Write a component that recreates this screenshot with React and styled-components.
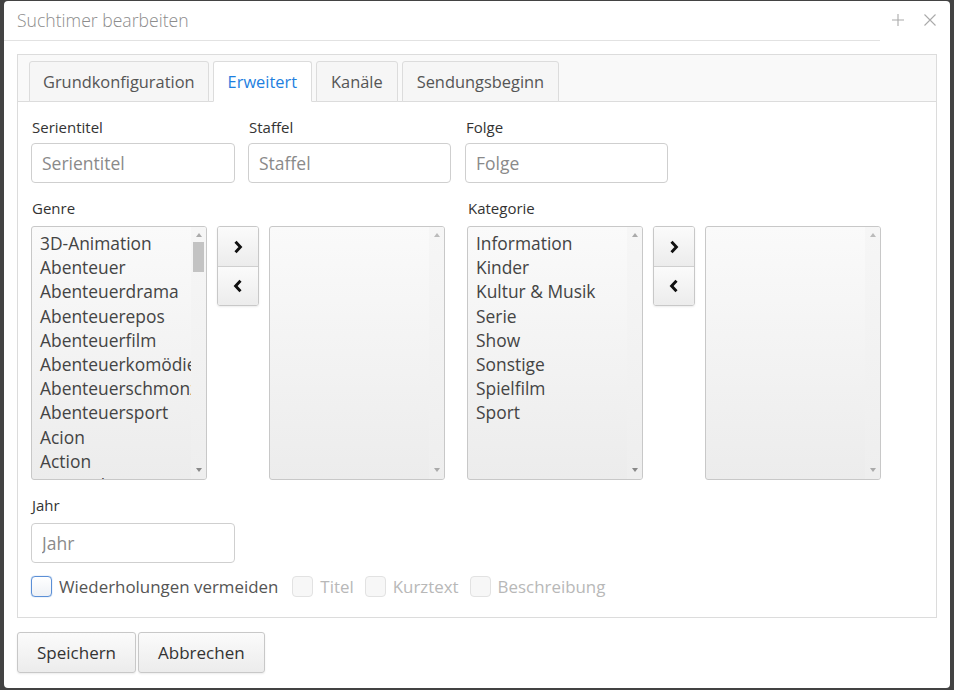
import React from "react";
import styled, { createGlobalStyle } from "styled-components";

const GlobalStyle = createGlobalStyle`
  html, body {
    margin: 0;
    padding: 0;
    background: #434343;
    font-family: "Open Sans", "Noto Sans", sans-serif;
  }
  * { box-sizing: border-box; }
`;

/* ---------------- page + dialog ---------------- */
const Page = styled.div`
  width: 954px;
  height: 690px;
  padding: 1px 4px 2px 4px;
  background: #434343;
  overflow: hidden;
`;

const Dialog = styled.div`
  width: 946px;
  height: 687px;
  background: #fff;
  border-radius: 4px;
  display: flex;
  flex-direction: column;
`;

const Header = styled.div`
  height: 40px;
  padding-bottom: 2px;
  display: flex;
  align-items: center;
  position: relative;
`;

const HeaderLine = styled.div`
  position: absolute;
  left: 0;
  bottom: 0;
  width: 876px;
  border-bottom: 1px solid #e2e2e2;
`;

const Title = styled.div`
  flex: 1;
  padding-left: 13px;
  font-size: 17.6px;
  font-weight: 300;
  color: #8c8c8c;
`;

const HeaderIcon = styled.span`
  width: 14px;
  height: 14px;
  display: flex;
  margin-right: ${(p) => p.gap}px;
  svg { display: block; }
`;

const Body = styled.div`
  padding: 13px 13px 0 13px;
`;

const Panel = styled.div`
  border: 1px solid #dcdcdc;
  height: 564px;
  display: flex;
  flex-direction: column;
`;

/* ---------------- tabs ---------------- */
const TabBar = styled.div`
  height: 47px;
  background: #f9f9f9;
  border-bottom: 1px solid #dcdcdc;
  display: flex;
  align-items: flex-end;
  gap: 4px;
  padding-left: 11px;
`;

const Tab = styled.div`
  height: 41px;
  padding: 0 ${(p) => p.px || 14}px 1px ${(p) => p.px || 14}px;
  margin-bottom: -1px;
  border: 1px solid #dcdcdc;
  border-bottom: 1px solid ${(p) => (p.active ? "#fff" : "#dcdcdc")};
  border-radius: 3px 3px 0 0;
  background: ${(p) => (p.active ? "#fff" : "#f6f6f6")};
  color: ${(p) => (p.active ? "#1e7fe0" : "#555")};
  font-size: 16.4px;
  display: flex;
  align-items: center;
`;

const Content = styled.div`
  padding: 16px 13px 0 13px;
  display: flex;
  flex-direction: column;
`;

const Row = styled.div`
  display: flex;
  margin-top: ${(p) => p.mt || 0}px;
  gap: ${(p) => p.gap || 13}px;
`;

const Field = styled.div`
  display: flex;
  flex-direction: column;
  width: ${(p) => p.w || 204}px;
  margin-left: ${(p) => p.ml || 0}px;
  margin-top: ${(p) => p.mt || 0}px;
`;

const Label = styled.label`
  font-size: 15px;
  color: #333;
  height: 19px;
  line-height: 19px;
  margin-left: 1px;
  margin-bottom: ${(p) => p.mb || 6}px;
`;

const TextInput = styled.input`
  width: 100%;
  height: 40px;
  border: 1px solid #cfcfcf;
  border-radius: 4px;
  padding: 0 10px;
  font-family: inherit;
  font-size: 17.5px;
  color: #333;
  background: #fff;
  outline: none;
  &::placeholder { color: #8a8a8a; }
`;

/* ---------------- dual list ---------------- */
const Dual = styled.div`
  display: flex;
  align-items: flex-start;
  gap: 10px;
`;

const ListBox = styled.div`
  width: 176px;
  height: 254px;
  border: 1px solid #c8c8c8;
  border-radius: 3px;
  background: linear-gradient(#fafafa, #ececec);
  display: flex;
  overflow: hidden;
`;

const Items = styled.div`
  flex: 1;
  overflow: hidden;
  padding: 4px 0 0 8px;
  white-space: nowrap;
`;

const Item = styled.div`
  font-size: 17.4px;
  line-height: 24.2px;
  color: #444;
`;

const Scrollbar = styled.div`
  width: 15px;
  display: flex;
  flex-direction: column;
  align-items: center;
  background: linear-gradient(#f6f6f6, #eeeeee);
  padding: 3px 0 4px;
`;

const Arrow = styled.div`
  width: 0;
  height: 0;
  border-left: 3.5px solid transparent;
  border-right: 3.5px solid transparent;
  ${(p) =>
    p.down
      ? `border-top: 4px solid ${p.dark ? "#888" : "#aaa"};`
      : `border-bottom: 4px solid ${p.dark ? "#aaa" : "#bbb"};`}
  margin: 3px 0;
`;

const Track = styled.div`
  flex: 1;
  width: 100%;
  display: flex;
  justify-content: center;
  padding-top: 2px;
`;

const Thumb = styled.div`
  width: 11px;
  height: 30px;
  background: #c3c3c3;
`;

const MoveGroup = styled.div`
  display: flex;
  flex-direction: column;
  width: 42px;
  border: 1px solid #c8c8c8;
  border-radius: 3px;
  box-shadow: 0 1px 2px rgba(0, 0, 0, 0.08);
  overflow: hidden;
`;

const MoveBtn = styled.div`
  height: 39px;
  display: flex;
  align-items: center;
  justify-content: center;
  background: linear-gradient(#fbfbfb, #ececec);
  & + & { border-top: 1px solid #cfcfcf; }
`;

/* ---------------- checkboxes ---------------- */
const CheckRow = styled.div`
  display: flex;
  align-items: center;
  margin-top: 12px;
  height: 22px;
`;

const Check = styled.label`
  display: flex;
  align-items: center;
  gap: 7px;
  font-size: 16.9px;
  color: ${(p) => (p.disabled ? "#b8b8b8" : "#555")};
  margin-right: ${(p) => p.mr}px;
`;

const Box = styled.span`
  width: 21px;
  height: 21px;
  border-radius: 4px;
  border: 1px solid ${(p) => (p.focus ? "#5b8fd6" : "#e2e2e2")};
  background: ${(p) => (p.focus ? "linear-gradient(#fff, #eef1f6)" : "#f7f7f7")};
  box-shadow: ${(p) => (p.focus ? "0 0 1px #5b8fd6" : "none")};
`;

/* ---------------- footer ---------------- */
const Footer = styled.div`
  display: flex;
  gap: 2px;
  padding: 14px 13px 0 13px;
`;

const Button = styled.button`
  height: 41px;
  padding: 0 19px;
  border: 1px solid #c8c8c8;
  border-radius: 3px;
  background: linear-gradient(#fbfbfb, #ececec);
  box-shadow: 0 1px 2px rgba(0, 0, 0, 0.08);
  font-family: inherit;
  font-size: 17px;
  color: #333;
`;

const Chevron = ({ left }) => (
  <svg width="12" height="14" viewBox="0 0 12 14">
    <path
      d={left ? "M8.5 1.8 L3.6 7 L8.5 12.2" : "M3.5 1.8 L8.4 7 L3.5 12.2"}
      fill="none"
      stroke="#111"
      strokeWidth="2.9"
    />
  </svg>
);

const List = ({ items, empty }) => (
  <ListBox>
    <Items>
      {items.map((t) => (
        <Item key={t}>{t}</Item>
      ))}
    </Items>
    <Scrollbar>
      <Arrow dark={!empty} />
      <Track>{items.length > 10 && <Thumb />}</Track>
      <Arrow down dark={!empty} />
    </Scrollbar>
  </ListBox>
);

const Mover = () => (
  <MoveGroup>
    <MoveBtn>
      <Chevron />
    </MoveBtn>
    <MoveBtn>
      <Chevron left />
    </MoveBtn>
  </MoveGroup>
);

const genres = [
  "3D-Animation",
  "Abenteuer",
  "Abenteuerdrama",
  "Abenteuerepos",
  "Abenteuerfilm",
  "Abenteuerkomödie",
  "Abenteuerschmonzette",
  "Abenteuersport",
  "Acion",
  "Action",
  "Actionabenteuer",
  "Actiondrama",
];

const kategorien = [
  "Information",
  "Kinder",
  "Kultur & Musik",
  "Serie",
  "Show",
  "Sonstige",
  "Spielfilm",
  "Sport",
];

export default function App() {
  return (
    <>
      <GlobalStyle />
      <Page>
        <Dialog>
          <Header>
            <Title>Suchtimer bearbeiten</Title>
            <HeaderIcon gap={18}>
              <svg width="14" height="14" viewBox="0 0 14 14">
                <path d="M7 1 V13 M1 7 H13" stroke="#aaa" strokeWidth="1.1" />
              </svg>
            </HeaderIcon>
            <HeaderIcon gap={13}>
              <svg width="14" height="14" viewBox="0 0 14 14">
                <path d="M1.5 1.5 L12.5 12.5 M12.5 1.5 L1.5 12.5" stroke="#aaa" strokeWidth="1.1" />
              </svg>
            </HeaderIcon>
            <HeaderLine />
          </Header>
          <Body>
            <Panel>
              <TabBar>
                <Tab px={13}>Grundkonfiguration</Tab>
                <Tab active>Erweitert</Tab>
                <Tab>Kanäle</Tab>
                <Tab>Sendungsbeginn</Tab>
              </TabBar>
              <Content>
                <Row>
                  <Field w={204}>
                    <Label>Serientitel</Label>
                    <TextInput placeholder="Serientitel" />
                  </Field>
                  <Field w={203}>
                    <Label>Staffel</Label>
                    <TextInput placeholder="Staffel" />
                  </Field>
                  <Field w={203} ml={1}>
                    <Label>Folge</Label>
                    <TextInput placeholder="Folge" />
                  </Field>
                </Row>
                <Row gap={22} mt={16}>
                  <Field w={414}>
                    <Label mb={8}>Genre</Label>
                    <Dual>
                      <List items={genres} />
                      <Mover />
                      <List items={[]} empty />
                    </Dual>
                  </Field>
                  <Field w={414}>
                    <Label mb={8}>Kategorie</Label>
                    <Dual>
                      <List items={kategorien} />
                      <Mover />
                      <List items={[]} empty />
                    </Dual>
                  </Field>
                </Row>
                <Field mt={16}>
                  <Label mb={8}>Jahr</Label>
                  <TextInput placeholder="Jahr" />
                </Field>
                <CheckRow>
                  <Check mr={14}>
                    <Box focus />
                    Wiederholungen vermeiden
                  </Check>
                  <Check disabled mr={11}>
                    <Box />
                    Titel
                  </Check>
                  <Check disabled mr={11}>
                    <Box />
                    Kurztext
                  </Check>
                  <Check disabled mr={0}>
                    <Box />
                    Beschreibung
                  </Check>
                </CheckRow>
              </Content>
            </Panel>
          </Body>
          <Footer>
            <Button>Speichern</Button>
            <Button>Abbrechen</Button>
          </Footer>
        </Dialog>
      </Page>
    </>
  );
}
